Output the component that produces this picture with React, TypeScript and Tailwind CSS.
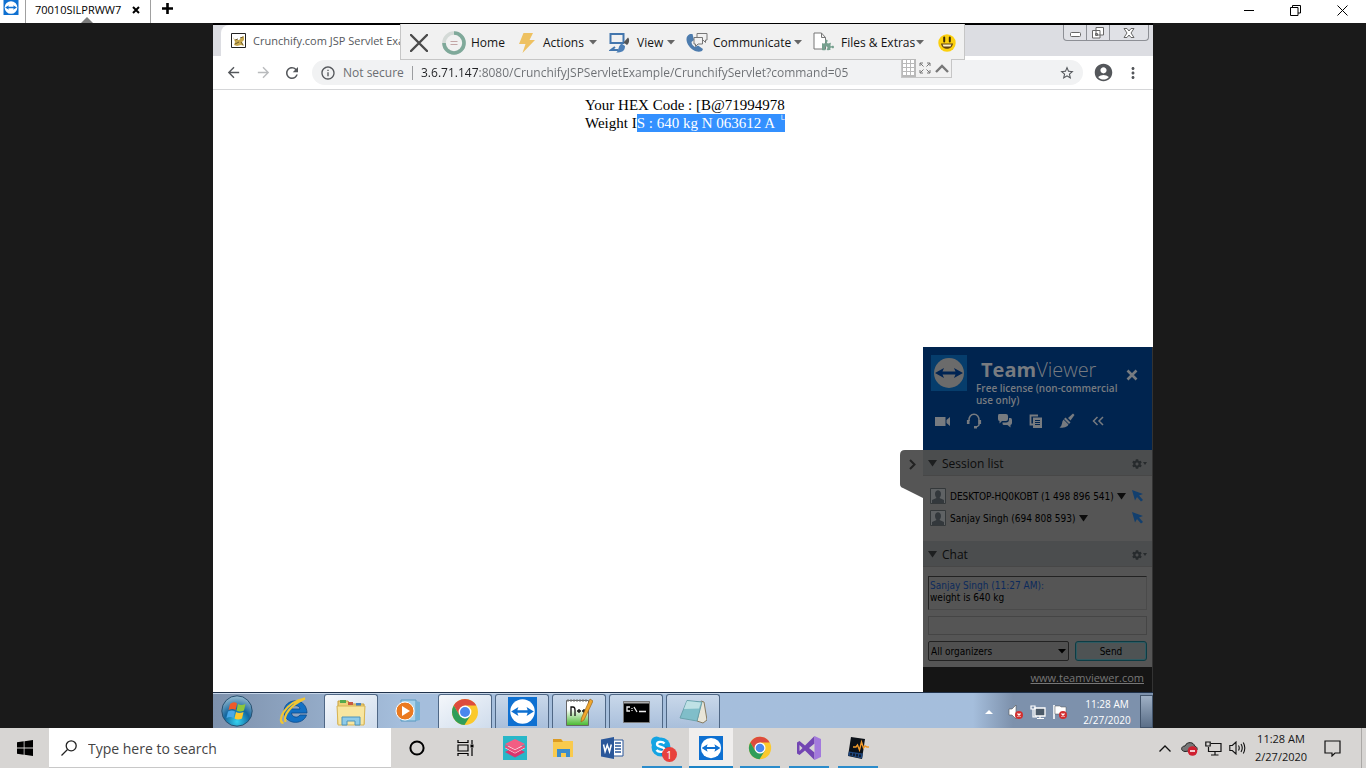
import React, { type ReactNode } from "react";
import { MdArrowBack, MdArrowForward, MdRefresh, MdInfoOutline, MdStarBorder, MdAccountCircle, MdMoreVert } from "react-icons/md";
import { FaCog, FaPhoneAlt, FaPuzzlePiece } from "react-icons/fa";

function TeamViewerLogo({ className }: { className: string }) {
  return (
    <svg viewBox="0 0 32 32" className={className} aria-hidden="true">
      <rect width="32" height="32" fill="#0e70d1" />
      <circle cx="16" cy="16" r="13.5" fill="#fff" />
      <path d="M3.5 16l8-5-1.2 3.6h11.4L20.500 11l8 5-8 5 1.200-3.600H10.300L11.500 21z" fill="#0e70d1" />
    </svg>
  );
}

function ChromeLogo({ className }: { className: string }) {
  return (
    <svg viewBox="0 0 28 28" className={className} aria-hidden="true">
      <circle cx="14" cy="14" r="13" fill="#fbc92d" />
      <path d="M2.740 7.500A13 13 0 0 1 25.260 7.500H14L8.400 17.200z" fill="#dd4b3e" />
      <path d="M2.740 7.500A13 13 0 0 0 13.500 27L19.600 17.200 14 20.500 8.400 17.200z" fill="#2f9d5a" />
      <circle cx="14" cy="14" r="6.400" fill="#fff" />
      <circle cx="14" cy="14" r="5" fill="#4a87ee" />
    </svg>
  );
}

function Caret({ className = "" }: { className?: string }) {
  return (
    <svg viewBox="0 0 8 5" className={`h-[5px] w-2 shrink-0 ${className}`} aria-hidden="true">
      <path d="M0 0h8L4 4.500z" fill="currentColor" />
    </svg>
  );
}

function BigCaret({ className = "" }: { className?: string }) {
  return (
    <svg viewBox="0 0 9 7" className={`h-[7px] w-[9px] shrink-0 ${className}`} aria-hidden="true">
      <path d="M0 0h9L4.500 6.500z" fill="currentColor" />
    </svg>
  );
}

function TitleBar() {
  return (
    <header className="flex h-[23px] shrink-0 bg-white text-black">
      <div className="w-[25px] shrink-0 pl-[3px]">
        <TeamViewerLogo className="h-[15px] w-4" />
      </div>
      <div className="relative flex w-[126px] items-center border-x border-[#a0a0a0] pb-1 pl-[9px]">
        <span className="w-[97px] whitespace-nowrap text-[11px] leading-4">70010SILPRWW7</span>
        <button aria-label="Close tab">
          <svg viewBox="0 0 8 8" className="h-2 w-2">
            <path d="M1 1l6 6M7 1L1 7" stroke="#000" strokeWidth="2" />
          </svg>
        </button>
        <svg viewBox="0 0 12 6" className="absolute bottom-0 left-[55px] h-1.5 w-3" aria-hidden="true">
          <path d="M0 6l6-6 6 6z" fill="#7d7d7d" />
        </svg>
      </div>
      <button aria-label="New tab" className="flex w-8 items-center justify-center pb-[6px]">
        <svg viewBox="0 0 11 11" className="h-[11px] w-[11px]">
          <path d="M5.500 0v11M0 5.500h11" stroke="#000" strokeWidth="2.600" />
        </svg>
      </button>
      <div className="ml-auto flex">
        <button aria-label="Minimize" className="flex w-[46px] items-center justify-center pb-[2px]">
          <svg viewBox="0 0 11 11" className="h-[11px] w-[11px]"><path d="M0 5.500h10" stroke="#000" /></svg>
        </button>
        <button aria-label="Restore" className="flex w-[46px] items-center justify-center pb-[2px]">
          <svg viewBox="0 0 11 11" className="h-[11px] w-[11px]"><path d="M.5 2.500h7.500v8H.5zM2.500 2.500v-2h8v7.500H8" stroke="#000" fill="none" /></svg>
        </button>
        <button aria-label="Close" className="flex w-[48px] items-center justify-center pb-[2px]">
          <svg viewBox="0 0 11 11" className="h-[11px] w-[11px]"><path d="M.5.5l10 10M10.500.5l-10 10" stroke="#000" /></svg>
        </button>
      </div>
    </header>
  );
}

function SessionToolbar() {
  return (
    <div className="absolute left-[187px] top-px flex h-9 w-[565px] items-center border border-t-0 border-[#c6c6c6] bg-[#f1f1f1] pt-[2px] text-[12px] leading-4 text-[#151515]">
      <button aria-label="Close session" className="flex w-[36px] justify-center">
        <svg viewBox="0 0 18 18" className="h-[18px] w-[18px]"><path d="M1 1l16 16M17 1L1 17" stroke="#4b4b4b" strokeWidth="2.400" strokeLinecap="round" /></svg>
      </button>
      <button className="flex w-[82px] items-center gap-[5px] pl-[5px]">
        <svg viewBox="0 0 24 24" className="h-6 w-6" fill="none">
          <circle cx="12" cy="12" r="10" stroke="#d4dad7" strokeWidth="3.600" />
          <path d="M12 2A10 10 0 1 1 2 12" stroke="#7fa99a" strokeWidth="3.600" />
          <path d="M8.500 10.500h7M8.500 13.500h7" stroke="#c3a5a5" />
        </svg>
        Home
      </button>
      <button className="flex w-[88px] items-center gap-2">
        <svg viewBox="0 0 16 20" className="h-5 w-4"><path d="M4.500 0h9.500L10.500 7H16L3.500 20 6.500 11H0z" fill="#eec161" /></svg>
        <span className="w-[42px] text-left">Actions</span>
        <Caret className="-ml-1 text-[#666]" />
      </button>
      <button className="flex w-[76px] items-center gap-[6px] pl-[2px]">
        <svg viewBox="0 0 22 22" className="h-[22px] w-[22px] shrink-0" fill="none">
          <path d="M1.500 2h13v9h-13zM6 15l-4 3h7" stroke="#4376ad" strokeWidth="2" />
          <path d="M19 5.500c2 2 1 6-1 7.500l-3.500-2.500z" fill="#555" />
          <path d="M12.500 11.500l3.500 2.500c0 5-3 6.500-9 6.500 3-1 1.500-6 5.500-9z" fill="#4e80b7" />
        </svg>
        <span className="w-[24px] text-left">View</span>
        <Caret className="text-[#666]" />
      </button>
      <button className="flex w-[128px] items-center gap-[5px] pl-[2px]">
        <svg viewBox="0 0 23 22" className="h-[22px] w-[23px] shrink-0">
          <path d="M5 2C0 4 1 10 4 14s8 7 13 5l1-2-5-3.500-3 1.500c-2-1-3.500-3-3.500-5L9 8 7.500 2z" fill="#4d7cae" />
          <path d="M12 1.500h10v6.500h-1.500v2.500L18 8h-6z" fill="#f1f1f1" stroke="#777" />
          <path d="M9 5.500h8.500V12H13l-2.500 2.500V12H9z" fill="#f1f1f1" stroke="#777" />
        </svg>
        <span className="w-[76px] text-left">Communicate</span>
        <Caret className="text-[#666]" />
      </button>
      <button className="flex w-[118px] items-center gap-[5px] pl-[2px]">
        <svg viewBox="0 0 23 21" className="h-[21px] w-[23px] shrink-0">
          <path d="M1 1h7.500l4 4.500V17H1zM8.500 1v4.500h4" fill="#fff" stroke="#777" />
          <FaPuzzlePiece x="9" y="7" width="14" height="14" color="#76a18f" />
        </svg>
        <span className="w-[70px] whitespace-nowrap text-left">Files &amp; Extras</span>
        <Caret className="text-[#666]" />
      </button>
      <button aria-label="Feedback" className="ml-[9px]">
        <svg viewBox="0 0 18 18" className="h-[18px] w-[18px]">
          <circle cx="9" cy="9" r="8.700" fill="#fcd00d" />
          <path d="M6.200 3.500v4M11.800 3.500v4" stroke="#3b2b08" strokeWidth="2" strokeLinecap="round" />
          <path d="M3 9.500h12c-1 7-11 7-12 0z" fill="#60420e" /><path d="M4.500 10.500h9l-1 2h-7z" fill="#fff1c5" />
        </svg>
      </button>
      <div className="absolute left-[500px] top-[35px] flex h-[19px] w-[51px] items-center border border-t-0 border-[#c6c6c6] bg-[#f1f1f1]">
        <svg viewBox="0 0 14 18" className="h-[18px] w-3.5" aria-hidden="true">
          <path d="M0 0h14v18H0z" fill="#b9b9b9" />
          <path d="M1 1h3v3H1zm4 0h3v3H5zm4 0h3v3H9zM1 5h3v3H1zm4 0h3v3H5zm4 0h3v3H9zM1 9h3v3H1zm4 0h3v3H5zm4 0h3v3H9zM1 13h3v3H1zm4 0h3v3H5zm4 0h3v3H9z" fill="#fff" />
        </svg>
        <button aria-label="Full screen" className="ml-[3px]">
          <svg viewBox="0 0 12 12" className="h-3 w-3" fill="none" stroke="#777"><path d="M1 4V1h3M8 1h3v3M11 8v3H8M4 11H1V8M1 1l3.500 3.500M11 1L7.500 4.500M11 11L7.500 7.500M1 11l3.500-3.500" /></svg>
        </button>
        <button aria-label="Collapse toolbar" className="ml-1">
          <svg viewBox="0 0 14 9" className="h-[9px] w-3.5" fill="none"><path d="M1 8l6-6 6 6" stroke="#777" strokeWidth="2.400" /></svg>
        </button>
      </div>
    </div>
  );
}

function BrowserChrome() {
  return (
    <div className="shrink-0 border-t-2 border-black bg-white">
      <div className="flex h-[31px] items-end bg-[#dcdde2]">
        <div className="ml-2 flex h-full w-[240px] items-center gap-[7px] overflow-hidden rounded-t-lg bg-white pl-[10px] text-[11px] text-[#55585c]">
          <svg viewBox="0 0 15 15" className="h-[15px] w-[15px] shrink-0" aria-hidden="true">
            <path d="M.5.5h14v14H.5z" fill="#fff" stroke="#222" />
            <path d="M2 4l2 3 4 0 3-3 2-1v4l-2 2 2 4-3-1-4 1-3-1 1-3z" fill="#c8a94e" />
            <path d="M4 7l3-1M9 5l3-1M4 11l4-2M10 9l2 3" stroke="#6b5a2c" />
          </svg>
          <span className="whitespace-nowrap leading-4">Crunchify.com JSP Servlet Example</span>
        </div>
        <div className="mb-auto ml-auto mr-1 flex h-4 divide-x divide-[#8d8f95] rounded-b-[4px] border border-t-0 border-[#8d8f95] bg-[#e0e1e6]">
          <button aria-label="Minimize browser" className="flex w-[23px] items-center justify-center">
            <svg viewBox="0 0 11 5" className="mt-1 h-[5px] w-[11px]"><rect x=".5" y=".5" width="10" height="4" rx="1" fill="#fff" stroke="#666" /></svg>
          </button>
          <button aria-label="Restore browser" className="flex w-[23px] items-center justify-center">
            <svg viewBox="0 0 12 12" className="h-3 w-3" fill="#fff" stroke="#666"><path d="M4 .5h7.500V8H4zM.5 3.500H8V11H.500zM3.500 6.500h2v2h-2z" /></svg>
          </button>
          <button aria-label="Close browser" className="flex w-[38px] items-center justify-center">
            <svg viewBox="0 0 12 10" className="h-2.5 w-3"><path d="M1 .5h3l2 2.500 2-2.500h3L8 5l3 4.500H8L6 7 4 9.500H1L4 5z" fill="#fff" stroke="#666" /></svg>
          </button>
        </div>
      </div>
      <div className="flex h-[34px] items-center border-b border-[#d5d6d8] pl-3 text-[#54575b]">
        <button aria-label="Back"><MdArrowBack className="h-[17px] w-[17px]" /></button>
        <button aria-label="Forward" className="ml-[13px] text-[#b9bbbd]"><MdArrowForward className="h-[17px] w-[17px]" /></button>
        <button aria-label="Reload" className="ml-[11px]"><MdRefresh className="h-[18px] w-[18px]" /></button>
        <div className="ml-[11px] flex h-[25px] flex-1 items-center rounded-full bg-[#f1f2f3] pl-2 pr-2 text-[12px]">
          <MdInfoOutline className="h-4 w-4 shrink-0" />
          <span className="ml-[7px] w-[69px] whitespace-nowrap text-[#6b6e72]">Not secure</span>
          <span className="mr-2 h-3.5 w-px bg-[#9b9da0]" />
          <input
            aria-label="Address"
            className="min-w-0 flex-1 bg-[linear-gradient(90deg,#202124_58px,#6b6e72_58px)] bg-clip-text text-[12px] text-transparent outline-none"
            defaultValue="3.6.71.147:8080/CrunchifyJSPServletExample/CrunchifyServlet?command=05"
          />
          <button aria-label="Bookmark"><MdStarBorder className="h-4 w-4" /></button>
        </div>
        <button aria-label="Profile" className="ml-[10px]"><MdAccountCircle className="h-[21px] w-[21px]" /></button>
        <button aria-label="Menu" className="ml-[10px] mr-[11px]"><MdMoreVert className="h-[18px] w-[18px]" /></button>
      </div>
    </div>
  );
}

function SectionHeader({ title }: { title: string }) {
  return (
    <div className="flex h-[26px] items-center border-b border-[#474747] bg-[#4b4d4e] pl-[5px] pr-[5px] pt-[2px] text-[12px] text-[#0c0c0c]">
      <BigCaret className="text-[#1d1f20]" />
      <h3 className="ml-[5px]">{title}</h3>
      <button aria-label={`${title} settings`} className="ml-auto flex items-center gap-px text-[#272b2d]">
        <FaCog className="h-[10px] w-[10px]" />
        <svg viewBox="0 0 4 3" className="h-[3px] w-1"><path d="M0 0h4L2 3z" fill="currentColor" /></svg>
      </button>
    </div>
  );
}

function Participant({ name }: { name: string }) {
  return (
    <li className="flex h-[22px] items-center pl-[7px] pr-2 font-['DejaVu_Sans_Condensed','DejaVu_Sans',sans-serif] text-[10px] text-black">
      <svg viewBox="0 0 16 16" className="h-4 w-4 shrink-0" aria-hidden="true">
        <path d="M.5.5h15v15H.5z" fill="#5f6264" stroke="#34383a" />
        <path d="M5 6c0-5 6-5 6 0 0 2-1 3-1.500 4L14 12v3H2v-3l4.500-2C6 9 5 8 5 6z" fill="#33383c" />
      </svg>
      <span className="ml-1 whitespace-nowrap">{name}</span>
      <BigCaret className="ml-[3px] text-[#0c0c0c]" />
      <svg viewBox="0 0 12 12" className="ml-auto h-3 w-3 shrink-0" aria-hidden="true"><path d="M0 0l11 4-4 1.500 4 4.500-2 1.500-4-4.500L3 10.500z" fill="#123f6e" /></svg>
    </li>
  );
}

function TeamViewerPanel() {
  return (
    <aside className="absolute bottom-0 right-0 flex w-[230px] flex-col border-r border-[#333] bg-[#555]">
      <button aria-label="Hide panel" className="absolute -left-[23px] top-[103px]">
        <svg viewBox="0 0 23 48" className="h-12 w-[23px]">
          <path d="M23 0H5Q0 0 0 5v29q0 3 3 4l20 10z" fill="#555" />
          <path d="M10 10l4.500 4.500L10 19" stroke="#222" strokeWidth="2" fill="none" />
        </svg>
      </button>
      <div className="h-[103px] bg-[#00244f] text-[#777b80]">
        <div className="flex h-[60px] pl-2 pt-2">
          <svg viewBox="0 0 36 36" className="h-9 w-9 shrink-0" aria-hidden="true">
            <path d="M0 0h36v36H0z" fill="#063d6c" /><circle cx="18" cy="18" r="15" fill="#6b6b6b" />
            <path d="M4 18l9-5-1.500 3.500h13L23 13l9 5-9 5 1.500-3.500h-13L13 23z" fill="#002453" />
          </svg>
          <div className="ml-[9px] w-[145px]">
            <h2 className="pl-[5px] pt-[2px] text-[20px] leading-[25px]"><b>Team</b><span className="font-light">Viewer</span></h2>
            <p className="text-[10px] font-semibold leading-3">Free license (non-commercial use only)</p>
          </div>
          <button aria-label="Close panel" className="mt-[14px] self-start pl-[5px]">
            <svg viewBox="0 0 12 12" className="h-3 w-3"><path d="M1.500 1.500l9 9M10.500 1.500l-9 9" stroke="#777b80" strokeWidth="2.600" /></svg>
          </button>
        </div>
        <div className="flex gap-[15px] pl-3 pt-[6px]">
          <button aria-label="Video"><svg viewBox="0 0 16 16" className="h-4 w-4" fill="currentColor"><path d="M0 4h10.500v9H0zM15 4v9l-3.500-3V7z" /></svg></button>
          <button aria-label="Voice over IP"><svg viewBox="0 0 16 16" className="h-4 w-4" fill="none" stroke="currentColor" strokeWidth="1.500"><path d="M3 8C2-1 14-1 13 8v4q-1 2-4 2" /><path d="M2.200 7v4M13.800 7v4M8 14.200h3" strokeWidth="2.600" /></svg></button>
          <button aria-label="Chat"><svg viewBox="0 0 16 16" className="h-4 w-4" fill="currentColor"><path d="M2 1h7q2 0 2 2v3q0 2-2 2H5L2.500 10.500V8Q1 8 1 6V3q0-2 1-2z" /><path d="M12 5h1.500q1.500 0 1.500 2v3q0 1.500-1.500 2v2.500L10.500 12H7q-1.500 0-1.500-1.500V9.500H9q3 0 3-3z" /></svg></button>
          <button aria-label="File transfer"><svg viewBox="0 0 16 16" className="h-4 w-4"><path d="M10 2.500H2.500v9H5" fill="none" stroke="currentColor" strokeWidth="1.800" /><path d="M5 4.500h9V15H5z" fill="currentColor" /><path d="M7 7.500h5M7 9.500h5M7 11.500h5" stroke="#00244f" /></svg></button>
          <button aria-label="Whiteboard"><svg viewBox="0 0 16 16" className="h-4 w-4" fill="currentColor"><path d="M14 .5L15.500 2 11.500 7.500 9 5z" /><path d="M6.500 4.500l5 5-1.500 1.500-5-5z" /><path d="M4.500 6.500l5 5-1 1.500q-3 2.500-8 1.500 2-1 2.500-4 .2-2.500 1.500-4z" /></svg></button>
          <button aria-label="Less"><svg viewBox="0 0 16 16" className="h-4 w-4" fill="none" stroke="currentColor" strokeWidth="1.500"><path d="M7.500 4l-4 4 4 4M13 4L9 8l4 4" /></svg></button>
        </div>
      </div>
      <SectionHeader title="Session list" />
      <ul className="h-[65px] pt-[9px]">
        <Participant name="DESKTOP-HQ0KOBT (1 498 896 541)" />
        <Participant name="Sanjay Singh (694 808 593)" />
      </ul>
      <SectionHeader title="Chat" />
      <div className="flex h-[100px] flex-col px-[5px] pt-[9px] font-['DejaVu_Sans_Condensed','DejaVu_Sans',sans-serif] text-[10px] leading-3 text-black">
        <div className="h-[34px] border border-[#4a4a4a] border-l-[#222] border-t-[#222] pl-px pt-[3px] leading-3">
          <p className="text-[#0c2a5c]">Sanjay Singh (11:27 AM):</p>
          <p>weight is 640 kg</p>
        </div>
        <input aria-label="Chat message" className="mt-[6px] h-[19px] border border-[#454545] bg-transparent px-1 outline-none" />
        <div className="mt-[6px] flex h-[20px] gap-[6px]">
          <div className="relative flex-1">
            <select aria-label="Recipients" className="h-full w-full appearance-none rounded-[2px] border border-[#222] bg-[#505050] pl-[2px] pt-px outline-none">
              <option>All organizers</option>
            </select>
            <Caret className="absolute right-[3px] top-2" />
          </div>
          <button className="w-[72px] rounded-[3px] border border-[#0c3c44] bg-[#4e5354] pt-px ring-1 ring-inset ring-[#2f5a61]">Send</button>
        </div>
      </div>
      <div className="h-[25px] bg-[#151515] pr-2 pt-[3px] text-right text-[11px] leading-4">
        <a href="#teamviewer" className="text-[#777] underline">www.teamviewer.com</a>
      </div>
    </aside>
  );
}

function RemotePage() {
  return (
    <main className="relative min-h-0 flex-1 bg-white pt-[6px]">
      <div className="mx-auto w-[196px] whitespace-nowrap font-['Liberation_Serif',serif] text-[15px] leading-[18px] text-black">
        <p>Your HEX Code : [B@71994978</p>
        <p className="flex">
          Weight I
          <span className="flex bg-[#3390ff] text-white">
            S : 640 kg N 063612 A
            <span className="pl-1 text-[8px] leading-[12px]">└</span>
          </span>
        </p>
      </div>
      <TeamViewerPanel />
    </main>
  );
}

function RemoteTask({ label, boxed, active, children }: { label: string; boxed?: boolean; active?: boolean; children: ReactNode }) {
  const look = active
    ? "border border-b-0 border-[#4f6785] bg-linear-to-br from-[#f4f7fb] to-[#cfdcec] rounded-t-[3px]"
    : boxed
      ? "border border-b-0 border-[#4f6785] bg-linear-to-b from-[#c9d8ea] to-[#a9bfdb] rounded-t-[3px]"
      : "";
  return (
    <button aria-label={label} className={`flex w-[54px] items-center justify-center ${look}`}>
      {children}
    </button>
  );
}

function ErrorBadge() {
  return (
    <>
      <circle cx="11" cy="11" r="4" fill="#d32f2f" />
      <path d="M9.500 9.500l3 3M12.500 9.500l-3 3" stroke="#fff" strokeWidth="1.300" />
    </>
  );
}

function RemoteTaskbar() {
  return (
    <footer className="flex h-9 shrink-0 border-t border-[#20324b] bg-linear-to-r from-[#7d91ac] via-[#a5bedc] via-20% to-[#a5bedc]">
      <div className="flex gap-[3px] border-t border-[#c5d5e8]">
        <button aria-label="Start remote" className="flex w-[51px] items-center pl-2">
          <svg viewBox="0 0 32 32" className="h-8 w-8">
            <defs><radialGradient id="orb" cx=".5" cy=".85" r=".85"><stop stopColor="#35d2ef" /><stop offset=".5" stopColor="#14669f" /><stop offset="1" stopColor="#9cbed1" /></radialGradient></defs>
            <circle cx="16" cy="16" r="15.200" fill="url(#orb)" stroke="#285070" />
            <path d="M9 9q4-3 7-.5l-1.500 6.500q-3-2-7 0z" fill="#f05a29" /><path d="M17 9q3 2 7.500 0L23 15.500q-4 2-7.500 0z" fill="#8cc63e" />
            <path d="M7 16.500q4-2 7 0L12.500 23q-3-2-7 0z" fill="#49a8e8" /><path d="M15 17q3 2 7.500 0L21 23.500q-4 2-7.500 0z" fill="#fdc82c" />
          </svg>
        </button>
        <RemoteTask label="Internet Explorer">
          <svg viewBox="0 0 30 30" className="h-[30px] w-[30px]">
            <path fillRule="evenodd" d="M28 17H12.500c.5 4.500 6 5.500 8.500 2h6.500C24 30 5 28.500 5 15.500 5 2 27.500 0 28 17zM12.500 13h8.500c-.5-4.500-8-4.500-8.500 0z" fill="#1270c4" stroke="#0b4a8c" strokeWidth=".8" />
            <path d="M4.500 27C-3 26 6 6 26 2.500 12 9 4 19 6.500 26" fill="none" stroke="#f2c632" strokeWidth="2.200" />
          </svg>
        </RemoteTask>
        <RemoteTask label="Explorer remote" active>
          <svg viewBox="0 0 30 28" className="h-7 w-[30px]">
            <path d="M2 3h10l2 3h14v20H2z" fill="#edd27a" stroke="#c89f3c" /><path d="M4 2h6v3H4z" fill="#55aa4c" /><path d="M12 4h5v3h-5z" fill="#c95b42" /><path d="M20 5h5v3h-5z" fill="#4683c0" />
            <path d="M1 8h28l-1 19H2z" fill="#f8e6a0" stroke="#d7b353" /><path d="M6 27v-8h18v8h-5v-4h-8v4z" fill="#8fcbe8" stroke="#4c94bd" />
          </svg>
        </RemoteTask>
        <RemoteTask label="Media Player">
          <svg viewBox="0 0 28 26" className="h-[26px] w-7"><path d="M7 2h15v21H7z" fill="#a6d1ea" stroke="#5998be" /><path d="M22 3l4 1v18l-4 1z" fill="#76b1d4" /><circle cx="11" cy="13" r="9" fill="#ea7a20" stroke="#fff" /><path d="M8 8l8 5-8 5z" fill="#fff" /></svg>
        </RemoteTask>
        <RemoteTask label="Chrome remote" active><ChromeLogo className="h-7 w-7" /></RemoteTask>
        <RemoteTask label="TeamViewer remote" boxed><TeamViewerLogo className="h-[29px] w-[29px]" /></RemoteTask>
        <RemoteTask label="Notepad++" boxed>
          <svg viewBox="0 0 28 28" className="h-7 w-7">
            <defs><linearGradient id="npp" x2="0" y2="1"><stop offset=".35" stopColor="#fff" /><stop offset="1" stopColor="#46b82d" /></linearGradient></defs>
            <path d="M1.500 2.500h22v25h-22z" fill="url(#npp)" stroke="#666" /><path d="M3 1v3M6 1v3M9 1v3M12 1v3M15 1v3M18 1v3M21 1v3" stroke="#777" />
            <path d="M6 18V9h2q2 0 2 3v6M12 13h4M14 11v4M17 13h4M19 11v4" stroke="#111" strokeWidth="1.300" fill="none" />
            <path d="M25 1l3 2-9 19-3 2 .5-4z" fill="#f0a72e" stroke="#9b6519" strokeWidth=".7" />
          </svg>
        </RemoteTask>
        <RemoteTask label="Command Prompt" boxed>
          <svg viewBox="0 0 27 22" className="h-[22px] w-[27px]"><path d="M.5.5h26v21H.5z" fill="#000" stroke="#777" /><path d="M1 1h25v1.500H1z" fill="#aaa" /><path d="M7 6H4v4h3M9 7v1M9 9v1M11 6l3 5M16 10.500h7" fill="none" stroke="#eee" strokeWidth="1.300" /></svg>
        </RemoteTask>
        <RemoteTask label="Notepad" boxed>
          <svg viewBox="0 0 28 28" className="h-7 w-7"><path d="M22 3l3 1 3 18-4 3-6-2z" fill="#e8e5d8" stroke="#857b62" /><path d="M8 2.500l15 1.500-5 19L1 20z" fill="#80bec9" stroke="#6aa2ac" /><path d="M8 3l14 1.500-2 6L5 11z" fill="#bfe1e5" /></svg>
        </RemoteTask>
      </div>
      <div className="ml-auto flex w-[200px] items-center justify-end bg-linear-to-r from-[#a5bedc] from-10% to-[#7d91ac] to-30% pt-[2px] text-white">
        <svg viewBox="0 0 8 4" className="mr-[15px] h-1 w-2" aria-hidden="true"><path d="M0 4l4-4 4 4z" fill="#fff" /></svg>
        <svg viewBox="0 0 16 16" className="mr-[6px] h-4 w-4" aria-hidden="true"><path d="M1 5h3l4-4v14l-4-4H1z" fill="#fff" stroke="#555" strokeWidth=".6" /><ErrorBadge /></svg>
        <svg viewBox="0 0 16 16" className="mr-[6px] h-4 w-4" aria-hidden="true"><path d="M5 4h10v8H5z" fill="#4b5a69" stroke="#fff" strokeWidth="1.300" /><path d="M10 12v2M7 14.500h7M1 2h4v3H1zM3 5v8h4" fill="none" stroke="#fff" strokeWidth="1.200" /></svg>
        <svg viewBox="0 0 16 16" className="mr-[14px] h-4 w-4" aria-hidden="true"><path d="M2 1v14" stroke="#fff" strokeWidth="1.600" /><path d="M3 2h5l1 1h5v7H3z" fill="#fff" stroke="#555" strokeWidth=".5" /><ErrorBadge /></svg>
        <div className="w-[50px] whitespace-nowrap text-center text-[10px] leading-4">11:28 AM<br />2/27/2020</div>
        <button aria-label="Show remote desktop" className="ml-[8px] h-full w-[13px] border border-[#42546b] bg-linear-to-b from-[#9fb0c5] to-[#5b6f88]" />
      </div>
    </footer>
  );
}

function HostTask({ label, running, active, children }: { label: string; running?: boolean; active?: boolean; children: ReactNode }) {
  return (
    <button aria-label={label} className="flex w-[49px] justify-center">
      <span
        className={`flex h-full items-center justify-center border-b-2 pt-[2px] ${active ? "w-[44px] border-[#1c83c6] bg-[#f0eeed]" : running ? "w-10 border-[#2b8ccb]" : "w-10 border-transparent"}`}
      >
        {children}
      </span>
    </button>
  );
}

function HostTaskbar() {
  return (
    <footer className="flex h-10 shrink-0 bg-[#d7d5d3] text-black">
      <button aria-label="Start" className="flex w-[49px] items-center justify-center">
        <svg viewBox="0 0 16 16" className="h-4 w-4"><path d="M0 2.200l6.700-.9v6.300H0zM7.500 1.200L16 0v7.600H7.500zM0 8.400h6.700v6.300L0 13.800zM7.500 8.400H16V16l-8.500-1.200z" /></svg>
      </button>
      <label className="flex w-[342px] items-center border-b border-[#c8c8c8] bg-white pl-3 pt-px">
        <svg viewBox="0 0 16 16" className="h-4 w-4" fill="none" stroke="#222" strokeWidth="1.300"><circle cx="10.200" cy="5.800" r="5" /><path d="M6.500 9.500L.5 15.500" /></svg>
        <input aria-label="Search" placeholder="Type here to search" className="ml-[11px] min-w-0 flex-1 text-[14px] outline-none placeholder:text-[#444]" />
      </label>
      <nav className="flex pl-px">
        <HostTask label="Cortana"><svg viewBox="0 0 16 16" className="h-4 w-4"><circle cx="8" cy="8" r="6.600" fill="none" stroke="#000" strokeWidth="2" /></svg></HostTask>
        <HostTask label="Task View"><svg viewBox="0 0 17 16" className="h-4 w-[17px]" fill="none" stroke="#000" strokeWidth="1.200"><path d="M1 0v2.500h10V0M1 5h10v6H1zM1 16v-2.500h10V16M15 0v4M15 8v8" /><path d="M13.500 4.500h3v3h-3z" fill="#000" stroke="none" /></svg></HostTask>
        <HostTask label="Layers">
          <svg viewBox="0 0 24 24" className="h-6 w-6"><path d="M0 0h24v24H0z" fill="#28b7c8" /><path d="M2 16l10-5 10 5-10 5.500z" fill="#d8366d" /><path d="M2 12l10-5 10 5-10 5.500z" fill="#fff" /><path d="M2 8l10-5 10 5-10 5.500z" fill="#f25d83" /><path d="M2 9l10 5 10-5v2.500L12 17 2 11.500z" fill="#e94d79" /></svg>
        </HostTask>
        <HostTask label="File Explorer"><svg viewBox="0 0 21 20" className="h-5 w-[21px]"><path d="M0 1h8l2 2h10v16H0z" fill="#f9ca4d" /><path d="M0 1h8l2 3H0z" fill="#dc9b22" /><path d="M4 19v-8h13v8h-4v-4H8v4z" fill="#3c8ccb" /></svg></HostTask>
        <HostTask label="Word">
          <svg viewBox="0 0 23 22" className="h-[22px] w-[23px]"><path d="M12 3h10v16H12z" fill="#fff" stroke="#2a579a" /><path d="M14 6h6M14 9h6M14 12h6M14 15h6" stroke="#2a579a" strokeWidth="1.300" /><path d="M0 2.500L13 0v22L0 19.500z" fill="#2a579a" /><path d="M2.500 7.500l1.600 7 2.200-6.500 2.200 6.500 1.800-7" fill="none" stroke="#fff" strokeWidth="1.500" /></svg>
        </HostTask>
        <HostTask label="Skype" running>
          <span className="relative">
            <svg viewBox="0 0 24 24" className="h-6 w-6"><circle cx="11" cy="11" r="9.500" fill="#14a4e3" /><circle cx="6.500" cy="6" r="5.500" fill="#14a4e3" /><circle cx="16" cy="16" r="5.500" fill="#0787ca" /><path d="M14.500 7.500c-2-2.500-7.500-2-7.500.7 0 3.300 7.500 2 7.500 5.300 0 3-6 3.300-8 .5" fill="none" stroke="#fff" strokeWidth="2.300" /></svg>
            <span className="absolute -right-[3px] bottom-[-2px] flex h-[15px] w-[15px] items-center justify-center rounded-full bg-[#e8423d] text-[10px] leading-none text-white">1</span>
          </span>
        </HostTask>
        <HostTask label="TeamViewer" active><TeamViewerLogo className="h-6 w-6" /></HostTask>
        <HostTask label="Chrome" running><ChromeLogo className="h-6 w-6" /></HostTask>
        <HostTask label="Visual Studio" running>
          <svg viewBox="0 0 24 24" className="h-6 w-6"><path fillRule="evenodd" d="M0 6.500L2.500 5 8 9.500 17.500 0v24L8 14.500 2.500 19 0 17.500zM2.500 9v6l3-3zM17.500 7.500L12 12l5.500 4.500z" fill="#7346b3" /><path d="M17.500 0L24 3v18l-6.500 3z" fill="#a379dd" /></svg>
        </HostTask>
        <HostTask label="Activity Monitor" running>
          <svg viewBox="0 0 22 24" className="h-6 w-[22px]"><path d="M4 1l14 2-3 20-14-3z" fill="#0c1118" /><path d="M2 15.500l14 2-1 5L1 19.500z" fill="#20477d" /><path d="M4 17v2.500M7 17.500V20M10 18v2.500M13 18.500V21" stroke="#0c1118" strokeWidth="1.500" /><path d="M6 11h3l1.500-2 2 5 2-8 2 6 1.500-2 2 1h2" fill="none" stroke="#f19a2b" strokeWidth="1.400" /></svg>
        </HostTask>
      </nav>
      <div className="ml-auto flex items-center">
        <svg viewBox="0 0 12 7" className="mr-[10px] h-[7px] w-3" fill="none" stroke="#111" strokeWidth="1.300"><path d="M.5 6.500L6 1l5.500 5.500" /></svg>
        <svg viewBox="0 0 17 15" className="mr-[7px] h-[15px] w-[17px]"><path d="M4 10.500C-1 10 0 5 4 5c2-5 9-4 9.500 0 2 .5 3 2 2.500 4z" fill="#777" stroke="#222" /><circle cx="11.500" cy="10" r="4.800" fill="#cf2030" /><path d="M9 10h5" stroke="#fff" strokeWidth="1.500" /></svg>
        <svg viewBox="0 0 17 15" className="mr-[7px] h-[15px] w-[17px]" fill="none" stroke="#111" strokeWidth="1.200"><path d="M6 2.500h10v8H3.500V6M10 10.500V14M6 14h7.500M.8 1h4.400v4H.8z" /></svg>
        <svg viewBox="0 0 17 14" className="mr-[9px] h-3.5 w-[17px]" fill="none" stroke="#111" strokeWidth="1.100"><path d="M.8 4.500h2.500L7 1v12L3.300 9.500H.8zM9.500 4.500q1.500 2.500 0 5M12 3q2.500 4 0 8M14.300 1.500q3 5.500 0 11" /></svg>
        <div className="w-[52px] whitespace-nowrap text-center text-[11px] leading-[18px] text-[#161616]">11:28 AM<br />2/27/2020</div>
        <button aria-label="Notifications" className="ml-[17px] mr-5">
          <svg viewBox="0 0 17 17" className="h-[17px] w-[17px]" fill="none" stroke="#111" strokeWidth="1.200"><path d="M1 1h15v12h-5l-3 3v-3H1z" /></svg>
        </button>
        <span className="mr-1 h-full w-px bg-[#aaa8a6]" />
      </div>
    </footer>
  );
}

export default function App() {
  return (
    <div className="flex h-screen flex-col overflow-hidden bg-[#1a1a1a] font-['Open_Sans',sans-serif] text-[12px]">
      <TitleBar />
      <div className="flex min-h-0 flex-1 px-[213px]">
        <section aria-label="Remote desktop" className="relative flex min-w-0 flex-1 flex-col">
          <BrowserChrome />
          <RemotePage />
          <RemoteTaskbar />
          <SessionToolbar />
        </section>
      </div>
      <HostTaskbar />
    </div>
  );
}
